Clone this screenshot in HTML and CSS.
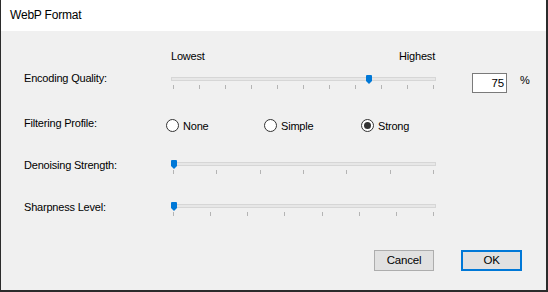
FILE: index.html
```html
<!DOCTYPE html>
<html>
<head>
<meta charset="utf-8">
<link rel="stylesheet" href="styles.css">
</head>
<body>
<div class="window">
  <div class="titlebar">WebP Format</div>
  <div class="content">
    <div class="row row-scale">
      <div></div>
      <div class="scale"><span>Lowest</span><span>Highest</span></div>
    </div>
    <div class="row row-quality">
      <div class="label">Encoding Quality:</div>
      <div class="slider slider-q">
        <div class="track"></div>
        <div class="ticks"><i></i><i></i><i></i><i></i><i></i><i></i><i></i><i></i><i></i><i></i><i></i></div>
        <svg class="thumb" style="left:195px" width="6" height="9" viewBox="0 0 6 9"><path d="M0 1 Q0 0 1 0 H5 Q6 0 6 1 V6 L3 9 L0 6 Z" fill="#0078d7"/></svg>
      </div>
      <div class="num-wrap">
        <div class="num">75</div>
        <span class="pct">%</span>
      </div>
    </div>
    <div class="row row-filter">
      <div class="label">Filtering Profile:</div>
      <div class="radios">
        <div class="radio"><span class="circle"></span><span>None</span></div>
        <div class="radio"><span class="circle"></span><span>Simple</span></div>
        <div class="radio"><span class="circle checked"></span><span>Strong</span></div>
      </div>
    </div>
    <div class="row row-denoise">
      <div class="label">Denoising Strength:</div>
      <div class="slider slider-d">
        <div class="track"></div>
        <div class="ticks"><i></i><i></i><i></i><i></i><i></i><i></i><i></i></div>
        <svg class="thumb" style="left:0px" width="6" height="9" viewBox="0 0 6 9"><path d="M0 1 Q0 0 1 0 H5 Q6 0 6 1 V6 L3 9 L0 6 Z" fill="#0078d7"/></svg>
      </div>
    </div>
    <div class="row row-sharp">
      <div class="label">Sharpness Level:</div>
      <div class="slider slider-s">
        <div class="track"></div>
        <div class="ticks"><i></i><i></i><i></i><i></i><i></i><i></i><i></i><i></i></div>
        <svg class="thumb" style="left:0px" width="6" height="9" viewBox="0 0 6 9"><path d="M0 1 Q0 0 1 0 H5 Q6 0 6 1 V6 L3 9 L0 6 Z" fill="#0078d7"/></svg>
      </div>
    </div>
    <div class="buttons">
      <div class="btn btn-cancel">Cancel</div>
      <div class="btn btn-ok">OK</div>
    </div>
  </div>
</div>
</body>
</html>
```
FILE: styles.css
```css
html, body {
  margin: 0;
  padding: 0;
  background: #2b2b2b;
}
body {
  width: 548px;
  height: 292px;
  overflow: hidden;
  font-family: "Liberation Sans", Arial, sans-serif;
  font-size: 11px;
  letter-spacing: -0.2px;
  color: #000;
}
.window {
  width: 545px;
  height: 290px;
  margin-left: 1px;
  background: #f0f0f0;
  display: flex;
  flex-direction: column;
}
.titlebar {
  height: 31px;
  line-height: 31px;
  background: #fff;
  padding-left: 9px;
  font-size: 12px;
  color: #000;
}
.content {
  padding: 19px 0 0 23px;
  flex: 1;
}
.row {
  display: grid;
  grid-template-columns: 147px 265px auto;
  align-items: start;
}
.label {
  line-height: 13px;
}
.row-scale {
  height: 13px;
}
.scale {
  display: flex;
  justify-content: space-between;
  line-height: 13px;
  padding-right: 1px;
}
.row-quality {
  margin-top: 9px;
  height: 24px;
}
.row-filter {
  margin-top: 21px;
  height: 16px;
}
.row-denoise {
  margin-top: 26px;
  height: 16px;
}
.row-sharp {
  margin-top: 26px;
  height: 16px;
}
.slider {
  position: relative;
  width: 265px;
  height: 16px;
}
.slider-q { margin-top: 3px; }
.slider-d { margin-top: 1px; }
.slider-s { margin-top: 1px; }
.track {
  margin-top: 2px;
  height: 4px;
  box-sizing: border-box;
  background: #e7e7e7;
  border: 1px solid #d6d6d6;
}
.ticks {
  margin-top: 4px;
  padding: 0 2px 0 2px;
  display: flex;
  justify-content: space-between;
  height: 4px;
}
.ticks i {
  display: block;
  width: 1px;
  height: 4px;
  background: #b4b4b4;
}
.thumb {
  position: absolute;
  top: 0;
  display: block;
}
.num-wrap {
  display: flex;
  align-items: flex-start;
  margin-left: 36px;
  margin-top: 1px;
}
.num {
  width: 35px;
  height: 20px;
  box-sizing: border-box;
  border: 1px solid #7a7a7a;
  background: #fff;
  text-align: right;
  padding-right: 2px;
  line-height: 18px;
  font-size: 11.5px;
}
.pct {
  margin-left: 13px;
  line-height: 13px;
  margin-top: 1px;
}
.radios {
  display: flex;
  margin-left: -5px;
  margin-top: 2px;
}
.radio {
  display: flex;
  align-items: center;
  gap: 4px;
  flex: none;
  width: 98px;
  height: 13px;
  line-height: 13px;
}
.radio:nth-child(2) {
  width: 97px;
}
.radio span:last-child {
  padding-top: 2px;
}
.circle {
  width: 13px;
  height: 13px;
  box-sizing: border-box;
  border: 1px solid #333;
  border-radius: 50%;
  background: #fff;
  display: flex;
  align-items: center;
  justify-content: center;
  flex: none;
}
.circle.checked::after {
  content: "";
  width: 7px;
  height: 7px;
  border-radius: 50%;
  background: #333;
}
.buttons {
  display: flex;
  justify-content: flex-end;
  gap: 27px;
  margin-top: 33px;
  padding-right: 24px;
}
.btn {
  height: 21px;
  box-sizing: border-box;
  background: #e1e1e1;
  border: 1px solid #adadad;
  text-align: center;
  line-height: 19px;
  font-size: 11.5px;
}
.btn-cancel {
  width: 60px;
}
.btn-ok {
  width: 61px;
  border: 2px solid #0078d7;
  line-height: 17px;
}
```
